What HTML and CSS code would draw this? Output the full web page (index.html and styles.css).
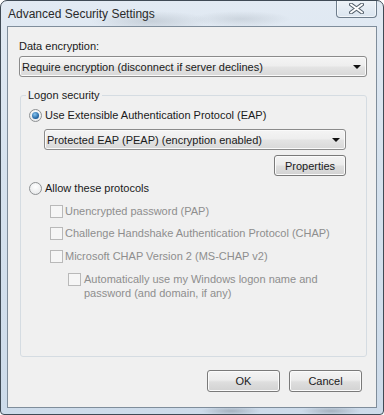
FILE: index.html
```html
<!DOCTYPE html>
<html lang="en">
  <head>
    <meta charset="UTF-8" />
    <title>Advanced Security Settings</title>
    <link rel="stylesheet" href="styles.css">
  </head>
  <body>
    <div class="window">
      <div class="titlebar">
        <span class="title">Advanced Security Settings</span>
        <span class="close">
          <svg width="15" height="11" viewBox="0 0 15 11">
            <path d="M2 1.5 L13 9.5 M13 1.5 L2 9.5" stroke="#56626e" stroke-width="4" stroke-linecap="round" />
            <path d="M2 1.5 L13 9.5 M13 1.5 L2 9.5" stroke="#ffffff" stroke-width="2" stroke-linecap="round" />
          </svg>
        </span>
      </div>
      <div class="client">
        <div class="label">Data encryption:</div>
        <div class="combo">
          <span>Require encryption (disconnect if server declines)</span>
          <span class="arrow"></span>
        </div>

        <fieldset class="group">
          <legend>Logon security</legend>
          <div class="row">
            <span class="radio on"></span>
            Use Extensible Authentication Protocol (EAP)
          </div>
          <div class="combo eap">
            <span>Protected EAP (PEAP) (encryption enabled)</span>
            <span class="arrow"></span>
          </div>
          <div class="props-row">
            <button class="btn props">Properties</button>
          </div>
          <div class="row allow">
            <span class="radio"></span>
            Allow these protocols
          </div>
          <div class="row check pap">
            <span class="box"></span>
            Unencrypted password (PAP)
          </div>
          <div class="row check chap">
            <span class="box"></span>
            Challenge Handshake Authentication Protocol (CHAP)
          </div>
          <div class="row check mschap">
            <span class="box"></span>
            Microsoft CHAP Version 2 (MS-CHAP v2)
          </div>
          <div class="row check auto">
            <span class="box"></span>
            <span>Automatically use my Windows logon name and<br>password (and domain, if any)</span>
          </div>
        </fieldset>

        <div class="actions">
          <button class="btn">OK</button>
          <button class="btn">Cancel</button>
        </div>
      </div>
    </div>
  </body>
</html>
```

FILE: styles.css
```css
* {
  margin: 0;
  padding: 0;
  box-sizing: border-box;
}

body {
  background: #ffffff;
  font-family: "Liberation Sans", Arial, sans-serif;
  font-size: 11px;
  color: #1a1a1a;
}

.window {
  width: 384px;
  height: 415px;
  border: 1px solid #3f4a55;
  border-radius: 7px 7px 4px 4px;
  padding: 0 6px 6px 6px;
  display: flex;
  flex-direction: column;
  overflow: hidden;
  background:
    radial-gradient(ellipse 60px 10px at 150px 20px, rgba(120, 130, 140, 0.25), transparent),
    radial-gradient(ellipse 50px 8px at 240px 18px, rgba(120, 130, 140, 0.2), transparent),
    radial-gradient(ellipse 30px 5px at 230px 410px, rgba(90, 100, 110, 0.35), transparent),
    radial-gradient(ellipse 30px 5px at 330px 410px, rgba(90, 100, 110, 0.35), transparent),
    linear-gradient(180deg, #e2eaf3 0%, #d6e2ee 40%, #cddbea 100%);
}

.titlebar {
  height: 25px;
  display: flex;
  justify-content: space-between;
  align-items: flex-start;
  flex-shrink: 0;
}

.title {
  padding: 6px 0 0 1px;
  font-size: 12px;
  line-height: 14px;
  color: #2a2a2a;
}

.close {
  width: 41px;
  height: 18px;
  margin-top: -1px;
  border: 1px solid #6e7d8c;
  border-top: 0;
  border-radius: 0 0 4px 4px;
  background: linear-gradient(180deg, #eef3f8, #dbe5ef);
  box-shadow: inset 0 0 0 1px rgba(255, 255, 255, 0.6);
  display: flex;
  align-items: center;
  justify-content: center;
}

.client {
  flex: 1;
  background: #f0f0f0;
  border: 1px solid #7f8d9b;
  padding: 12px 9px 0 11px;
  display: flex;
  flex-direction: column;
}

.label {
  line-height: 15px;
}

.combo {
  margin-top: 2px;
  height: 21px;
  border: 1px solid #8b8b8b;
  border-radius: 3px;
  background: linear-gradient(180deg, #f4f4f4 0%, #eeeeee 45%, #e3e3e3 55%, #d8d8d8 100%);
  box-shadow: inset 0 0 0 1px #fafafa;
  display: flex;
  align-items: center;
  justify-content: space-between;
  padding: 0 5px 0 2px;
}

.arrow {
  width: 0;
  height: 0;
  border-left: 4px solid transparent;
  border-right: 4px solid transparent;
  border-top: 4px solid #111;
}

.group {
  margin: 11px 0 0 1px;
  border: 1px solid #d5dce2;
  border-radius: 3px;
  padding: 0 0 56px 0;
}

.group legend {
  margin-left: 5px;
  padding: 0 2px;
  line-height: 15px;
}

.row {
  display: flex;
  align-items: center;
  line-height: 15px;
  margin: 5px 0 0 8px;
}

.radio {
  width: 13px;
  height: 13px;
  border-radius: 50%;
  border: 1px solid #8e9193;
  background: radial-gradient(circle at 50% 35%, #ffffff, #e2e4e6);
  margin-right: 3px;
  display: flex;
  align-items: center;
  justify-content: center;
}

.radio.on::after {
  content: "";
  width: 7px;
  height: 7px;
  border-radius: 50%;
  background: radial-gradient(circle at 40% 35%, #86c4f0, #1c5e9c 70%, #0f3f72);
}

.combo.eap {
  margin: 6px 0 0 23px;
  width: 302px;
}

.props-row {
  width: 302px;
  margin: 5px 0 0 23px;
  display: flex;
  justify-content: flex-end;
}

.btn {
  width: 73px;
  height: 22px;
  font-family: "Liberation Sans", Arial, sans-serif;
  font-size: 11px;
  color: #1a1a1a;
  border: 1px solid #7a7a7a;
  border-radius: 3px;
  background: linear-gradient(180deg, #f4f4f4 0%, #ececec 45%, #dedede 55%, #d2d2d2 100%);
  box-shadow: inset 0 0 0 1px #fbfbfb;
}

.btn.props {
  width: 72px;
  height: 21px;
}

.row.allow {
  margin-top: 5px;
}

.check {
  color: #8e8e8e;
  margin-left: 29px;
}

.box {
  width: 13px;
  height: 13px;
  border: 1px solid #b9b9b9;
  background: #f6f6f6;
  margin-right: 2px;
  flex-shrink: 0;
}

.row.pap {
  margin-top: 8px;
}

.row.chap {
  margin-top: 7px;
}

.row.mschap {
  margin-top: 8px;
}

.row.auto {
  margin: 8px 0 0 47px;
  align-items: flex-start;
  line-height: 14px;
}

.row.auto .box {
  margin: 1px 3px 0 0;
}

.actions {
  margin: 13px 5px 0 0;
  display: flex;
  justify-content: flex-end;
  gap: 9px;
}
```
